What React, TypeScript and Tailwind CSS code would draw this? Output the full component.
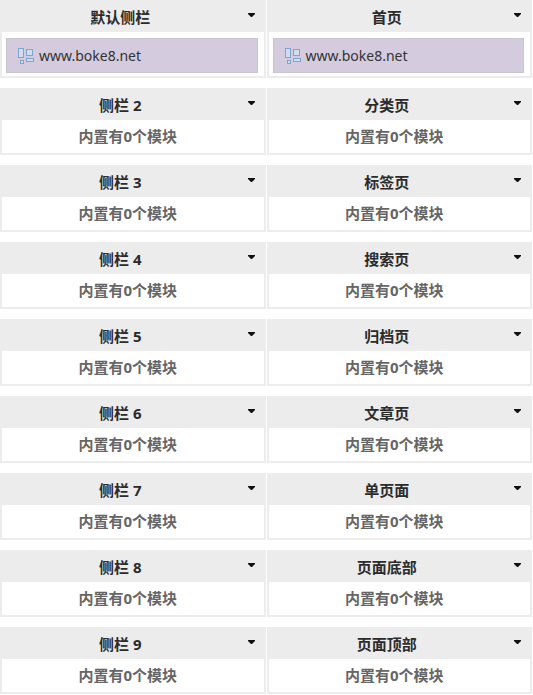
import { useState } from "react";

type Area = {
  name: string;
  modules: string[];
};

const rows: [Area, Area][] = [
  [
    { name: "默认侧栏", modules: ["www.boke8.net"] },
    { name: "首页", modules: ["www.boke8.net"] },
  ],
  [{ name: "侧栏 2", modules: [] }, { name: "分类页", modules: [] }],
  [{ name: "侧栏 3", modules: [] }, { name: "标签页", modules: [] }],
  [{ name: "侧栏 4", modules: [] }, { name: "搜索页", modules: [] }],
  [{ name: "侧栏 5", modules: [] }, { name: "归档页", modules: [] }],
  [{ name: "侧栏 6", modules: [] }, { name: "文章页", modules: [] }],
  [{ name: "侧栏 7", modules: [] }, { name: "单页面", modules: [] }],
  [{ name: "侧栏 8", modules: [] }, { name: "页面底部", modules: [] }],
  [{ name: "侧栏 9", modules: [] }, { name: "页面顶部", modules: [] }],
];

function ModuleIcon() {
  return (
    <svg width="18" height="18" viewBox="0 0 18 18" fill="#d3dcec" stroke="#7ba6d2" aria-hidden="true">
      <rect x="1.5" y="1.5" width="5" height="9" />
      <rect x="9.5" y="2.5" width="6" height="6" />
      <rect x="3.5" y="13.5" width="3" height="3" />
      <rect x="9.5" y="11.5" width="7" height="3" />
    </svg>
  );
}

function SidebarPanel({ area }: { area: Area }) {
  const [open, setOpen] = useState(true);

  return (
    <section className="border-2 border-t-0 border-[#ececec]">
      <h3 className="bg-[#ececec] text-[15px] font-bold text-[#2b2b2b]">
        <button
          type="button"
          aria-expanded={open}
          onClick={() => setOpen(!open)}
          className="flex h-8 w-full cursor-pointer items-center pr-2"
        >
          <span className="flex-1 pt-0.5 pr-2 text-center leading-5">{area.name}</span>
          <svg width="9" height="5" viewBox="0 0 9 5" className="mb-0.5 shrink-0" fill="#111" aria-hidden="true">
            <path d="M1 0h7v1L5 4H4L1 1z" />
          </svg>
        </button>
      </h3>

      {open && area.modules.length === 0 && (
        <p className="h-[33px] pr-2.5 text-center text-[15px] leading-[33px] font-bold text-[#666]">
          内置有{area.modules.length}个模块
        </p>
      )}

      {open && area.modules.length > 0 && (
        <ul className="pt-1.5 pr-1.5 pb-[3px] pl-1">
          {area.modules.map((name) => (
            <li
              key={name}
              className="flex h-[35px] items-center gap-1 border border-[#c9c5ce] bg-[#d4ccde] pl-2.5 text-[14px] text-[#333]"
            >
              <ModuleIcon />
              {name}
            </li>
          ))}
        </ul>
      )}
    </section>
  );
}

export default function App() {
  return (
    <main className="space-y-2.5 bg-white pr-px font-['Noto_Sans','Noto_Sans_CJK_SC',sans-serif]">
      {rows.map((row) => (
        <div key={row[0].name} className="grid grid-cols-2 items-start gap-x-px">
          {row.map((area) => (
            <SidebarPanel key={area.name} area={area} />
          ))}
        </div>
      ))}
    </main>
  );
}
